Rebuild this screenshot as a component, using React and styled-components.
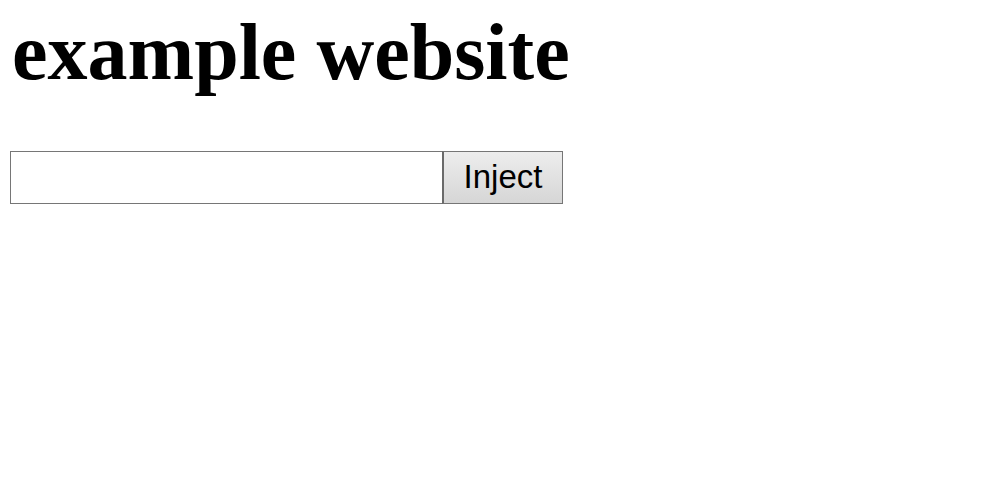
import React, { useState } from "react"
import styled, { createGlobalStyle } from "styled-components";

const GlobalStyle = createGlobalStyle`
    body {margin:0; background:#fff; font-family:"Liberation Serif", serif;}
`;

const Page = styled.div`
    padding:0 10px;
`;

const Title = styled.h1`
    margin:8px 0 0; padding-left:2px; font-size:80px; font-weight:bold; line-height:89px; color:#000;
    font-family:"Liberation Serif", serif;
`;

const Form = styled.form`
    display:flex; margin-top:54px;
`;

const Field = styled.input`
    box-sizing:border-box; width:432px; height:53px; margin:0; padding:0 8px;
    border:1px solid #767676; border-right:none; background:#fff;
    font-family:"Liberation Sans", sans-serif; font-size:30px; outline:none;
`;

const Btn = styled.button`
    box-sizing:border-box; width:121px; height:53px; margin:0; padding:0 0 2px;
    border:1px solid #767676; border-left:2px solid #6a6a6a;
    background:linear-gradient(#ededed, #d6d6d6); color:#000;
    font-family:"Liberation Sans", sans-serif; font-size:33px;
`;

const App = () => {
    const [val, setVal] = useState("");

    return (
        <Page>
            <GlobalStyle />
            <Title>example website</Title>
            <Form onSubmit={e => e.preventDefault()}>
                <Field value={val} onChange={e => setVal(e.target.value)} />
                <Btn type="submit">Inject</Btn>
            </Form>
        </Page>
    )
}

export default App
